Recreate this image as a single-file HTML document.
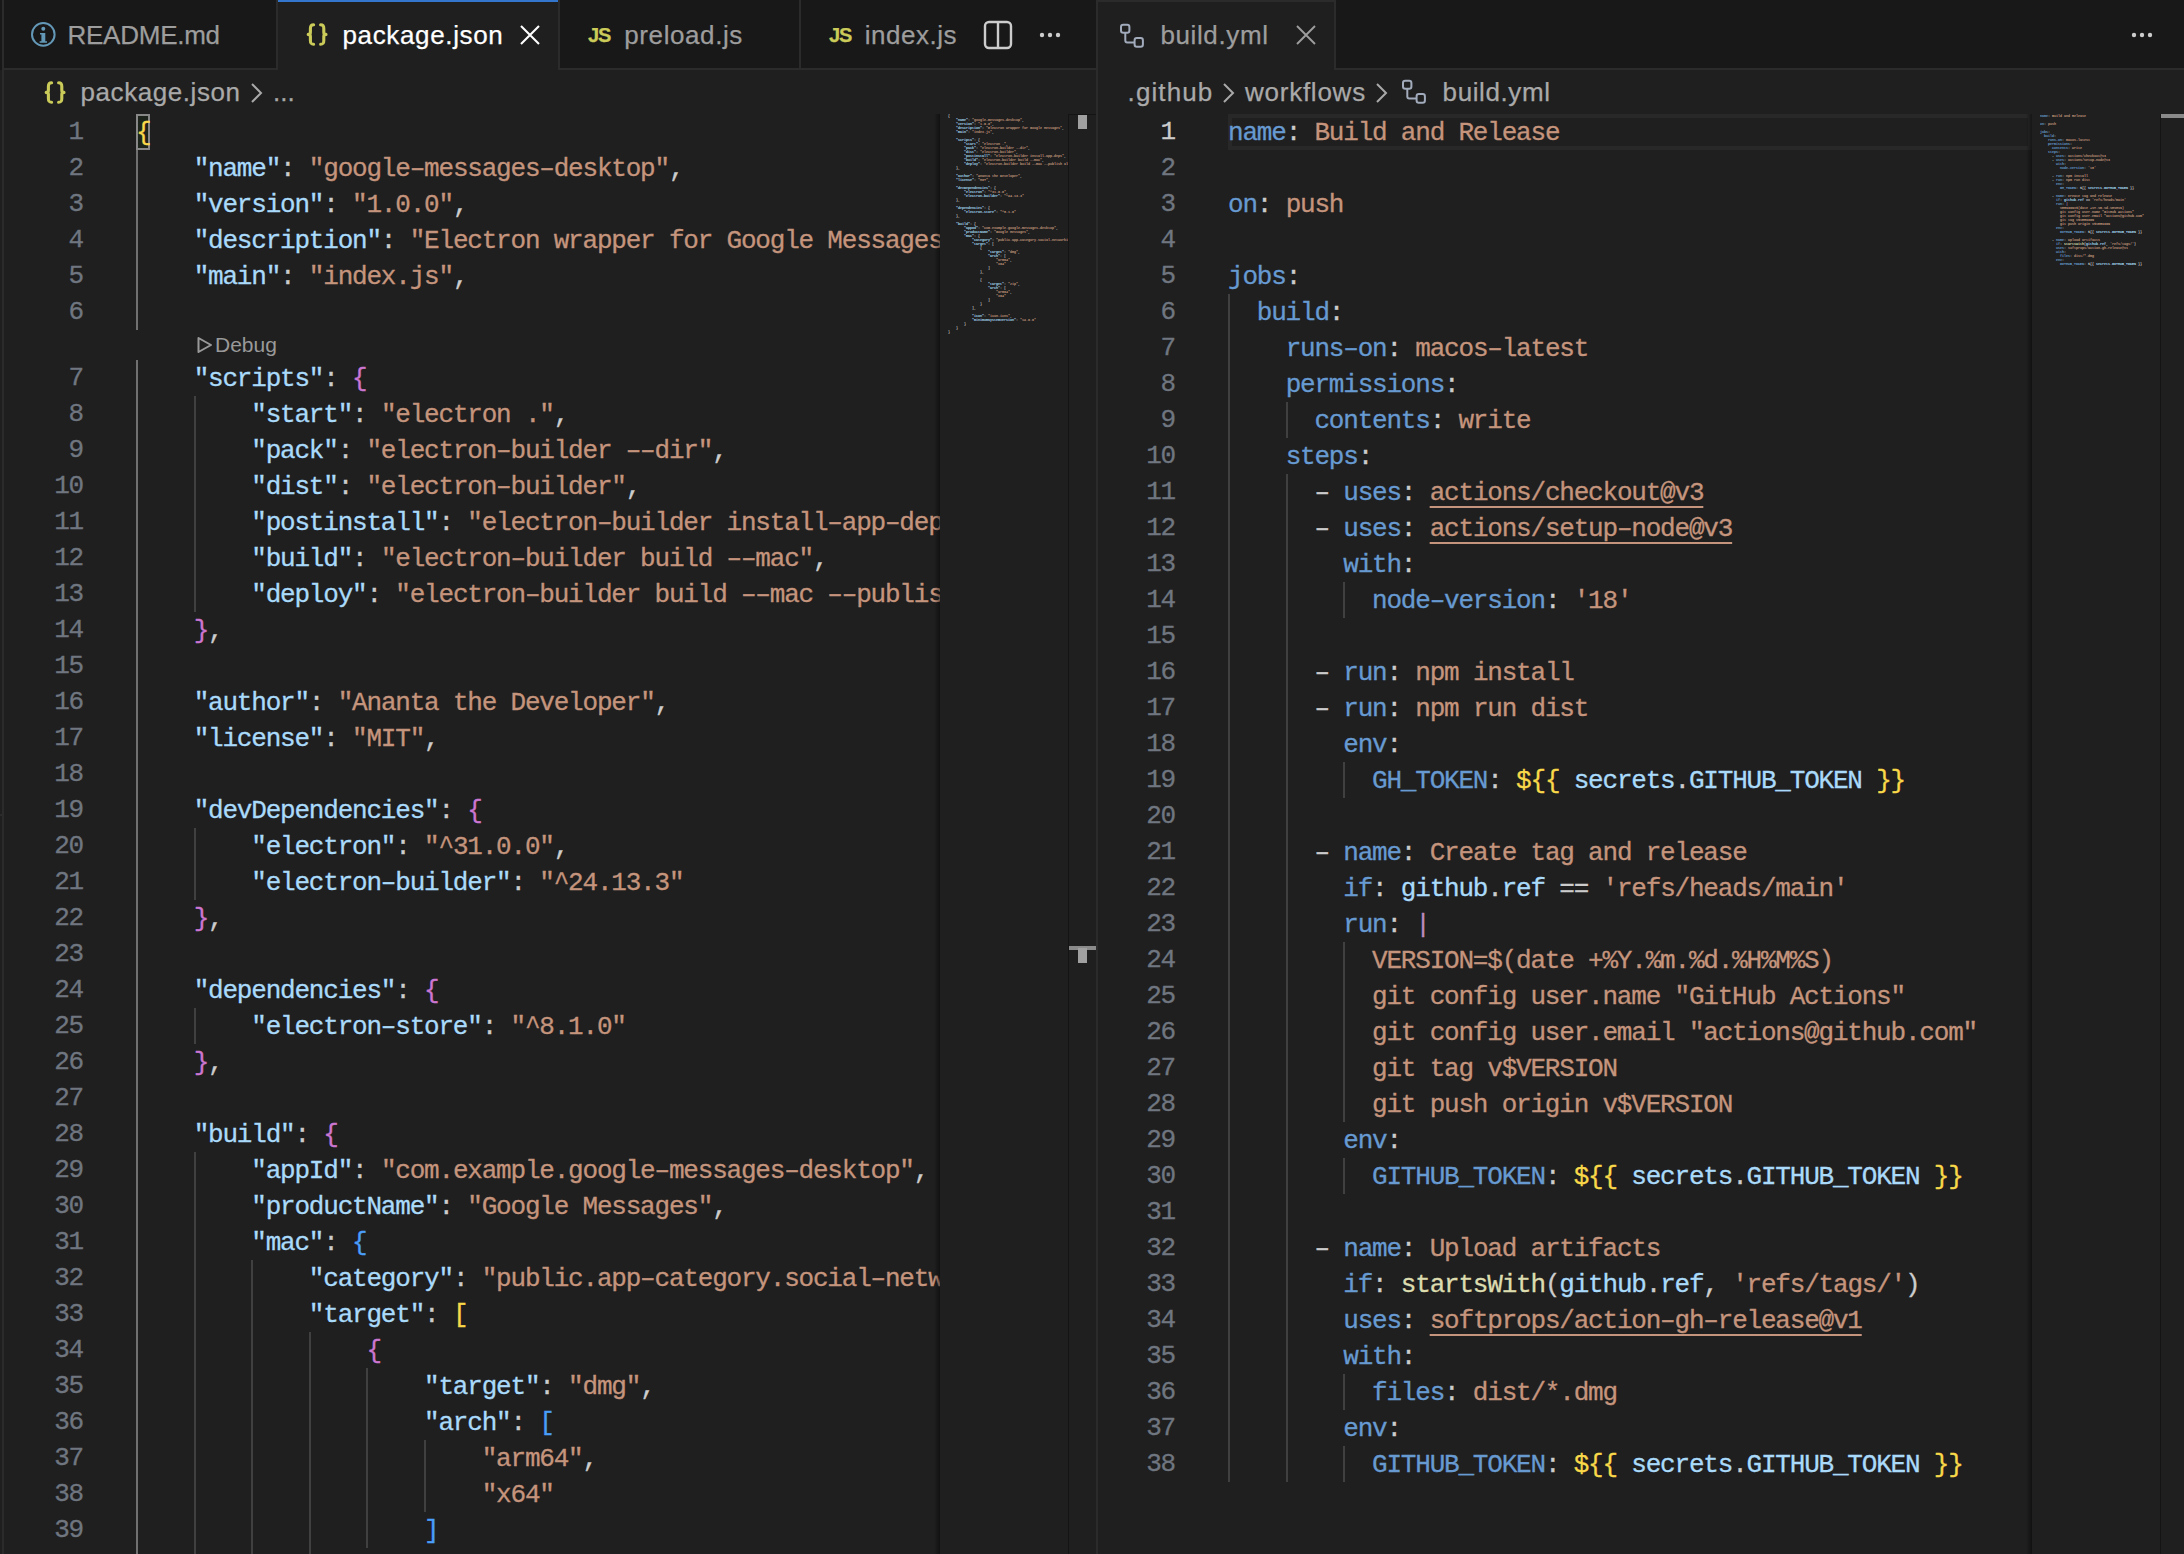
<!DOCTYPE html><html><head><meta charset="utf-8"><style>
*{margin:0;padding:0;box-sizing:border-box}
html,body{width:2184px;height:1554px;overflow:hidden;background:#1f1f1f}
body{position:relative;font-family:"Liberation Sans",sans-serif}
.a{position:absolute}
.g{position:absolute;width:2px}
.ln{position:absolute;height:36px;line-height:36px;padding-top:1px;white-space:pre;overflow:hidden;font-family:"Liberation Mono",monospace;font-size:26px;letter-spacing:-1.200px;-webkit-text-stroke:0.3px currentColor}
.ln span,.num{-webkit-text-stroke:0.3px currentColor}
.num{position:absolute;height:36px;line-height:36px;white-space:pre;font-family:"Liberation Mono",monospace;font-size:26px;letter-spacing:-1.200px;text-align:right}
.u{text-decoration:underline;text-decoration-thickness:2px;text-underline-offset:6px}
.tabt{position:absolute;top:0;height:70px;line-height:70px;font-size:26px;white-space:pre;-webkit-text-stroke:0.25px currentColor}
.bc{position:absolute;top:70px;height:44px;line-height:44px;font-size:26px;white-space:pre;color:#a9a9a9;-webkit-text-stroke:0.25px currentColor}
.mm{position:absolute;top:114px;white-space:pre;font-family:"Liberation Mono",monospace;font-size:13.333px;line-height:16px;transform:scale(0.25);transform-origin:0 0;font-weight:bold}
</style></head><body>
<div class="a" style="left:0;top:0;width:1096px;height:70px;background:#181818"></div>
<div class="a" style="left:2px;top:0;width:2px;height:1554px;background:#2b2b2b"></div>
<div class="a" style="left:0;top:814px;width:2px;height:2px;background:#2b2b2b"></div>
<div class="a" style="left:4px;top:68px;width:1092px;height:2px;background:#2b2b2b"></div>
<div class="a" style="left:276px;top:0;width:2px;height:68px;background:#2b2b2b"></div>
<div class="a" style="left:558px;top:0;width:2px;height:68px;background:#2b2b2b"></div>
<div class="a" style="left:799px;top:0;width:2px;height:68px;background:#2b2b2b"></div>
<div class="a" style="left:278px;top:0;width:280px;height:70px;background:#1f1f1f"></div>
<div class="a" style="left:278px;top:0;width:280px;height:2px;background:#3376cd"></div>
<svg class="a" style="left:30px;top:21px" width="27" height="27" viewBox="0 0 27 27"><circle cx="13.3" cy="13.4" r="11.3" fill="none" stroke="#6398b7" stroke-width="2"/><circle cx="13.3" cy="7.8" r="2" fill="#6398b7"/><path d="M10 12H15.3V20.2H17V21.8H9.6V20.2H11.4V13.5H10Z" fill="#6398b7"/></svg>
<div class="tabt" style="left:67.5px;letter-spacing:-0.25px;color:#9d9d9d">README.md</div>
<svg class="a" style="left:306px;top:23px" width="24" height="24" viewBox="0 0 24 24"><g fill="none" stroke="#cbcb5a" stroke-width="3.1" stroke-linecap="round" stroke-linejoin="round"><path d="M7.6 1.8C4.8 1.8 4.4 3 4.4 5.5V9.2C4.4 10.6 3.8 11.4 2.2 11.4C3.8 11.4 4.4 12.2 4.4 13.6V17.6C4.4 20.2 4.8 21.2 7.6 21.2"/><path d="M14.6 1.8C17.4 1.8 17.8 3 17.8 5.5V9.2C17.8 10.6 18.4 11.4 20 11.4C18.4 11.4 17.8 12.2 17.8 13.6V17.6C17.8 20.2 17.4 21.2 14.6 21.2"/></g></svg>
<div class="tabt" style="left:342.5px;letter-spacing:0.64px;color:#ffffff">package.json</div>
<svg class="a" style="left:519px;top:24px" width="22" height="22" viewBox="0 0 22 22"><path d="M2 2L20 20M20 2L2 20" stroke="#ffffff" stroke-width="2.1"/></svg>
<div class="tabt" style="left:588px;color:#cbcb5a;font-weight:bold;font-size:20px;letter-spacing:-1px">JS</div>
<div class="tabt" style="left:624.3px;letter-spacing:0.59px;color:#9d9d9d">preload.js</div>
<div class="tabt" style="left:829px;color:#cbcb5a;font-weight:bold;font-size:20px;letter-spacing:-1px">JS</div>
<div class="tabt" style="left:864.7px;letter-spacing:0.51px;color:#9d9d9d">index.js</div>
<svg class="a" style="left:982px;top:19px" width="32" height="32" viewBox="0 0 32 32"><rect x="3" y="3" width="26" height="26" rx="4" fill="none" stroke="#cccccc" stroke-width="2.4"/><path d="M16 3V29" stroke="#cccccc" stroke-width="2.4"/></svg>
<svg class="a" style="left:1036px;top:26px" width="28" height="18" viewBox="0 0 28 18"><circle cx="6" cy="9" r="2.2" fill="#cccccc"/><circle cx="14" cy="9" r="2.2" fill="#cccccc"/><circle cx="22" cy="9" r="2.2" fill="#cccccc"/></svg>
<div class="a" style="left:1098px;top:0;width:1086px;height:70px;background:#181818"></div>
<div class="a" style="left:1098px;top:68px;width:1086px;height:2px;background:#2b2b2b"></div>
<div class="a" style="left:1098px;top:0;width:236px;height:70px;background:#1f1f1f"></div>
<div class="a" style="left:1098px;top:0;width:236px;height:2px;background:#2b2b2b"></div>
<div class="a" style="left:1334px;top:0;width:2px;height:70px;background:#2b2b2b"></div>
<svg class="a" style="left:1119px;top:22.6px" width="28" height="28" viewBox="0 0 28 28"><g fill="none" stroke="#a1abbb" stroke-width="2"><rect x="2" y="1.8" width="8.4" height="8" rx="2.2"/><rect x="15.6" y="15" width="8.3" height="8.7" rx="2.2"/><path d="M6.3 9.8V17.4Q6.3 19.4 8.3 19.4H15.6"/></g></svg>
<div class="tabt" style="left:1160.4px;letter-spacing:0.62px;color:#9d9d9d">build.yml</div>
<svg class="a" style="left:1295px;top:24px" width="22" height="22" viewBox="0 0 22 22"><path d="M2 2L20 20M20 2L2 20" stroke="#9d9d9d" stroke-width="1.9"/></svg>
<svg class="a" style="left:2128px;top:26px" width="28" height="18" viewBox="0 0 28 18"><circle cx="6" cy="9" r="2.2" fill="#cccccc"/><circle cx="14" cy="9" r="2.2" fill="#cccccc"/><circle cx="22" cy="9" r="2.2" fill="#cccccc"/></svg>
<div class="a" style="left:1096px;top:0;width:2px;height:1554px;background:#2b2b2b"></div>
<svg class="a" style="left:44px;top:81px" width="24" height="24" viewBox="0 0 24 24"><g fill="none" stroke="#cbcb5a" stroke-width="3.1" stroke-linecap="round" stroke-linejoin="round"><path d="M7.6 1.8C4.8 1.8 4.4 3 4.4 5.5V9.2C4.4 10.6 3.8 11.4 2.2 11.4C3.8 11.4 4.4 12.2 4.4 13.6V17.6C4.4 20.2 4.8 21.2 7.6 21.2"/><path d="M14.6 1.8C17.4 1.8 17.8 3 17.8 5.5V9.2C17.8 10.6 18.4 11.4 20 11.4C18.4 11.4 17.8 12.2 17.8 13.6V17.6C17.8 20.2 17.4 21.2 14.6 21.2"/></g></svg>
<div class="bc" style="left:80.5px;letter-spacing:0.57px">package.json</div>
<svg class="a" style="left:250px;top:82px" width="14" height="22" viewBox="0 0 14 22"><path d="M2 2L11 11L2 20" fill="none" stroke="#a9a9a9" stroke-width="2"/></svg>
<div class="bc" style="left:273px">...</div>
<div class="bc" style="left:1127.6px;letter-spacing:1.1px">.github</div>
<svg class="a" style="left:1222px;top:82px" width="14" height="22" viewBox="0 0 14 22"><path d="M2 2L11 11L2 20" fill="none" stroke="#a9a9a9" stroke-width="2"/></svg>
<div class="bc" style="left:1245px;letter-spacing:0.75px">workflows</div>
<svg class="a" style="left:1375px;top:82px" width="14" height="22" viewBox="0 0 14 22"><path d="M2 2L11 11L2 20" fill="none" stroke="#a9a9a9" stroke-width="2"/></svg>
<svg class="a" style="left:1401px;top:79px" width="28" height="28" viewBox="0 0 28 28"><g fill="none" stroke="#a1abbb" stroke-width="2"><rect x="2" y="1.8" width="8.4" height="8" rx="2.2"/><rect x="15.6" y="15" width="8.3" height="8.7" rx="2.2"/><path d="M6.3 9.8V17.4Q6.3 19.4 8.3 19.4H15.6"/></g></svg>
<div class="bc" style="left:1442.6px;letter-spacing:0.59px">build.yml</div>
<div class="a" style="left:1228px;top:114px;width:804px;height:36px;border:4px solid #282828"></div>
<div class="a" style="left:136px;top:114px;width:14px;height:36px;border:2px solid #888888;background:#1d241c"></div>
<div class="g" style="left:136.0px;top:150px;height:180px;background:#707070"></div>
<div class="g" style="left:136.0px;top:360px;height:1728px;background:#707070"></div>
<div class="g" style="left:193.6px;top:396px;height:216px;background:#404040"></div>
<div class="g" style="left:193.6px;top:828px;height:72px;background:#404040"></div>
<div class="g" style="left:193.6px;top:1008px;height:36px;background:#404040"></div>
<div class="g" style="left:193.6px;top:1152px;height:900px;background:#404040"></div>
<div class="g" style="left:251.2px;top:1260px;height:756px;background:#404040"></div>
<div class="g" style="left:308.8px;top:1332px;height:540px;background:#404040"></div>
<div class="g" style="left:366.4px;top:1368px;height:180px;background:#404040"></div>
<div class="g" style="left:424.0px;top:1440px;height:72px;background:#404040"></div>
<div class="ln" style="left:136px;top:114px;width:804px"><span style="color:#f9d849">{</span></div>
<div class="num" style="right:2101px;top:114px;color:#6f7680">1</div>
<div class="ln" style="left:136px;top:150px;width:804px">    <span style="color:#aadafa">&quot;name&quot;</span><span style="color:#cccccc">:</span> <span style="color:#c5947c">&quot;google–messages–desktop&quot;</span><span style="color:#cccccc">,</span></div>
<div class="num" style="right:2101px;top:150px;color:#6f7680">2</div>
<div class="ln" style="left:136px;top:186px;width:804px">    <span style="color:#aadafa">&quot;version&quot;</span><span style="color:#cccccc">:</span> <span style="color:#c5947c">&quot;1.0.0&quot;</span><span style="color:#cccccc">,</span></div>
<div class="num" style="right:2101px;top:186px;color:#6f7680">3</div>
<div class="ln" style="left:136px;top:222px;width:804px">    <span style="color:#aadafa">&quot;description&quot;</span><span style="color:#cccccc">:</span> <span style="color:#c5947c">&quot;Electron wrapper for Google Messages&quot;</span><span style="color:#cccccc">,</span></div>
<div class="num" style="right:2101px;top:222px;color:#6f7680">4</div>
<div class="ln" style="left:136px;top:258px;width:804px">    <span style="color:#aadafa">&quot;main&quot;</span><span style="color:#cccccc">:</span> <span style="color:#c5947c">&quot;index.js&quot;</span><span style="color:#cccccc">,</span></div>
<div class="num" style="right:2101px;top:258px;color:#6f7680">5</div>
<div class="ln" style="left:136px;top:294px;width:804px"></div>
<div class="num" style="right:2101px;top:294px;color:#6f7680">6</div>
<div class="ln" style="left:136px;top:360px;width:804px">    <span style="color:#aadafa">&quot;scripts&quot;</span><span style="color:#cccccc">:</span> <span style="color:#cc76d1">{</span></div>
<div class="num" style="right:2101px;top:360px;color:#6f7680">7</div>
<div class="ln" style="left:136px;top:396px;width:804px">        <span style="color:#aadafa">&quot;start&quot;</span><span style="color:#cccccc">:</span> <span style="color:#c5947c">&quot;electron .&quot;</span><span style="color:#cccccc">,</span></div>
<div class="num" style="right:2101px;top:396px;color:#6f7680">8</div>
<div class="ln" style="left:136px;top:432px;width:804px">        <span style="color:#aadafa">&quot;pack&quot;</span><span style="color:#cccccc">:</span> <span style="color:#c5947c">&quot;electron–builder ––dir&quot;</span><span style="color:#cccccc">,</span></div>
<div class="num" style="right:2101px;top:432px;color:#6f7680">9</div>
<div class="ln" style="left:136px;top:468px;width:804px">        <span style="color:#aadafa">&quot;dist&quot;</span><span style="color:#cccccc">:</span> <span style="color:#c5947c">&quot;electron–builder&quot;</span><span style="color:#cccccc">,</span></div>
<div class="num" style="right:2101px;top:468px;color:#6f7680">10</div>
<div class="ln" style="left:136px;top:504px;width:804px">        <span style="color:#aadafa">&quot;postinstall&quot;</span><span style="color:#cccccc">:</span> <span style="color:#c5947c">&quot;electron–builder install–app–deps&quot;</span><span style="color:#cccccc">,</span></div>
<div class="num" style="right:2101px;top:504px;color:#6f7680">11</div>
<div class="ln" style="left:136px;top:540px;width:804px">        <span style="color:#aadafa">&quot;build&quot;</span><span style="color:#cccccc">:</span> <span style="color:#c5947c">&quot;electron–builder build ––mac&quot;</span><span style="color:#cccccc">,</span></div>
<div class="num" style="right:2101px;top:540px;color:#6f7680">12</div>
<div class="ln" style="left:136px;top:576px;width:804px">        <span style="color:#aadafa">&quot;deploy&quot;</span><span style="color:#cccccc">:</span> <span style="color:#c5947c">&quot;electron–builder build ––mac ––publish always&quot;</span></div>
<div class="num" style="right:2101px;top:576px;color:#6f7680">13</div>
<div class="ln" style="left:136px;top:612px;width:804px">    <span style="color:#cc76d1">}</span><span style="color:#cccccc">,</span></div>
<div class="num" style="right:2101px;top:612px;color:#6f7680">14</div>
<div class="ln" style="left:136px;top:648px;width:804px"></div>
<div class="num" style="right:2101px;top:648px;color:#6f7680">15</div>
<div class="ln" style="left:136px;top:684px;width:804px">    <span style="color:#aadafa">&quot;author&quot;</span><span style="color:#cccccc">:</span> <span style="color:#c5947c">&quot;Ananta the Developer&quot;</span><span style="color:#cccccc">,</span></div>
<div class="num" style="right:2101px;top:684px;color:#6f7680">16</div>
<div class="ln" style="left:136px;top:720px;width:804px">    <span style="color:#aadafa">&quot;license&quot;</span><span style="color:#cccccc">:</span> <span style="color:#c5947c">&quot;MIT&quot;</span><span style="color:#cccccc">,</span></div>
<div class="num" style="right:2101px;top:720px;color:#6f7680">17</div>
<div class="ln" style="left:136px;top:756px;width:804px"></div>
<div class="num" style="right:2101px;top:756px;color:#6f7680">18</div>
<div class="ln" style="left:136px;top:792px;width:804px">    <span style="color:#aadafa">&quot;devDependencies&quot;</span><span style="color:#cccccc">:</span> <span style="color:#cc76d1">{</span></div>
<div class="num" style="right:2101px;top:792px;color:#6f7680">19</div>
<div class="ln" style="left:136px;top:828px;width:804px">        <span style="color:#aadafa">&quot;electron&quot;</span><span style="color:#cccccc">:</span> <span style="color:#c5947c">&quot;^31.0.0&quot;</span><span style="color:#cccccc">,</span></div>
<div class="num" style="right:2101px;top:828px;color:#6f7680">20</div>
<div class="ln" style="left:136px;top:864px;width:804px">        <span style="color:#aadafa">&quot;electron–builder&quot;</span><span style="color:#cccccc">:</span> <span style="color:#c5947c">&quot;^24.13.3&quot;</span></div>
<div class="num" style="right:2101px;top:864px;color:#6f7680">21</div>
<div class="ln" style="left:136px;top:900px;width:804px">    <span style="color:#cc76d1">}</span><span style="color:#cccccc">,</span></div>
<div class="num" style="right:2101px;top:900px;color:#6f7680">22</div>
<div class="ln" style="left:136px;top:936px;width:804px"></div>
<div class="num" style="right:2101px;top:936px;color:#6f7680">23</div>
<div class="ln" style="left:136px;top:972px;width:804px">    <span style="color:#aadafa">&quot;dependencies&quot;</span><span style="color:#cccccc">:</span> <span style="color:#cc76d1">{</span></div>
<div class="num" style="right:2101px;top:972px;color:#6f7680">24</div>
<div class="ln" style="left:136px;top:1008px;width:804px">        <span style="color:#aadafa">&quot;electron–store&quot;</span><span style="color:#cccccc">:</span> <span style="color:#c5947c">&quot;^8.1.0&quot;</span></div>
<div class="num" style="right:2101px;top:1008px;color:#6f7680">25</div>
<div class="ln" style="left:136px;top:1044px;width:804px">    <span style="color:#cc76d1">}</span><span style="color:#cccccc">,</span></div>
<div class="num" style="right:2101px;top:1044px;color:#6f7680">26</div>
<div class="ln" style="left:136px;top:1080px;width:804px"></div>
<div class="num" style="right:2101px;top:1080px;color:#6f7680">27</div>
<div class="ln" style="left:136px;top:1116px;width:804px">    <span style="color:#aadafa">&quot;build&quot;</span><span style="color:#cccccc">:</span> <span style="color:#cc76d1">{</span></div>
<div class="num" style="right:2101px;top:1116px;color:#6f7680">28</div>
<div class="ln" style="left:136px;top:1152px;width:804px">        <span style="color:#aadafa">&quot;appId&quot;</span><span style="color:#cccccc">:</span> <span style="color:#c5947c">&quot;com.example.google–messages–desktop&quot;</span><span style="color:#cccccc">,</span></div>
<div class="num" style="right:2101px;top:1152px;color:#6f7680">29</div>
<div class="ln" style="left:136px;top:1188px;width:804px">        <span style="color:#aadafa">&quot;productName&quot;</span><span style="color:#cccccc">:</span> <span style="color:#c5947c">&quot;Google Messages&quot;</span><span style="color:#cccccc">,</span></div>
<div class="num" style="right:2101px;top:1188px;color:#6f7680">30</div>
<div class="ln" style="left:136px;top:1224px;width:804px">        <span style="color:#aadafa">&quot;mac&quot;</span><span style="color:#cccccc">:</span> <span style="color:#4a9df8">{</span></div>
<div class="num" style="right:2101px;top:1224px;color:#6f7680">31</div>
<div class="ln" style="left:136px;top:1260px;width:804px">            <span style="color:#aadafa">&quot;category&quot;</span><span style="color:#cccccc">:</span> <span style="color:#c5947c">&quot;public.app–category.social–networking&quot;</span><span style="color:#cccccc">,</span></div>
<div class="num" style="right:2101px;top:1260px;color:#6f7680">32</div>
<div class="ln" style="left:136px;top:1296px;width:804px">            <span style="color:#aadafa">&quot;target&quot;</span><span style="color:#cccccc">:</span> <span style="color:#f9d849">[</span></div>
<div class="num" style="right:2101px;top:1296px;color:#6f7680">33</div>
<div class="ln" style="left:136px;top:1332px;width:804px">                <span style="color:#cc76d1">{</span></div>
<div class="num" style="right:2101px;top:1332px;color:#6f7680">34</div>
<div class="ln" style="left:136px;top:1368px;width:804px">                    <span style="color:#aadafa">&quot;target&quot;</span><span style="color:#cccccc">:</span> <span style="color:#c5947c">&quot;dmg&quot;</span><span style="color:#cccccc">,</span></div>
<div class="num" style="right:2101px;top:1368px;color:#6f7680">35</div>
<div class="ln" style="left:136px;top:1404px;width:804px">                    <span style="color:#aadafa">&quot;arch&quot;</span><span style="color:#cccccc">:</span> <span style="color:#4a9df8">[</span></div>
<div class="num" style="right:2101px;top:1404px;color:#6f7680">36</div>
<div class="ln" style="left:136px;top:1440px;width:804px">                        <span style="color:#c5947c">&quot;arm64&quot;</span><span style="color:#cccccc">,</span></div>
<div class="num" style="right:2101px;top:1440px;color:#6f7680">37</div>
<div class="ln" style="left:136px;top:1476px;width:804px">                        <span style="color:#c5947c">&quot;x64&quot;</span></div>
<div class="num" style="right:2101px;top:1476px;color:#6f7680">38</div>
<div class="ln" style="left:136px;top:1512px;width:804px">                    <span style="color:#4a9df8">]</span></div>
<div class="num" style="right:2101px;top:1512px;color:#6f7680">39</div>
<div class="ln" style="left:136px;top:1548px;width:804px">                <span style="color:#cc76d1">}</span><span style="color:#cccccc">,</span></div>
<div class="num" style="right:2101px;top:1548px;color:#6f7680">40</div>
<div class="g" style="left:1228.0px;top:294px;height:1188px;background:#404040"></div>
<div class="g" style="left:1285.6px;top:402px;height:36px;background:#404040"></div>
<div class="g" style="left:1285.6px;top:474px;height:1008px;background:#404040"></div>
<div class="g" style="left:1343.2px;top:582px;height:36px;background:#404040"></div>
<div class="g" style="left:1343.2px;top:762px;height:36px;background:#404040"></div>
<div class="g" style="left:1343.2px;top:942px;height:180px;background:#404040"></div>
<div class="g" style="left:1343.2px;top:1158px;height:36px;background:#404040"></div>
<div class="g" style="left:1343.2px;top:1374px;height:36px;background:#404040"></div>
<div class="g" style="left:1343.2px;top:1446px;height:36px;background:#404040"></div>
<div class="ln" style="left:1228px;top:114px;width:804px"><span style="color:#679ad1">name</span><span style="color:#cccccc">:</span> <span style="color:#c5947c">Build and Release</span></div>
<div class="num" style="right:1009px;top:114px;color:#cccccc">1</div>
<div class="ln" style="left:1228px;top:150px;width:804px"></div>
<div class="num" style="right:1009px;top:150px;color:#6f7680">2</div>
<div class="ln" style="left:1228px;top:186px;width:804px"><span style="color:#679ad1">on</span><span style="color:#cccccc">:</span> <span style="color:#c5947c">push</span></div>
<div class="num" style="right:1009px;top:186px;color:#6f7680">3</div>
<div class="ln" style="left:1228px;top:222px;width:804px"></div>
<div class="num" style="right:1009px;top:222px;color:#6f7680">4</div>
<div class="ln" style="left:1228px;top:258px;width:804px"><span style="color:#679ad1">jobs</span><span style="color:#cccccc">:</span></div>
<div class="num" style="right:1009px;top:258px;color:#6f7680">5</div>
<div class="ln" style="left:1228px;top:294px;width:804px">  <span style="color:#679ad1">build</span><span style="color:#cccccc">:</span></div>
<div class="num" style="right:1009px;top:294px;color:#6f7680">6</div>
<div class="ln" style="left:1228px;top:330px;width:804px">    <span style="color:#679ad1">runs–on</span><span style="color:#cccccc">:</span> <span style="color:#c5947c">macos–latest</span></div>
<div class="num" style="right:1009px;top:330px;color:#6f7680">7</div>
<div class="ln" style="left:1228px;top:366px;width:804px">    <span style="color:#679ad1">permissions</span><span style="color:#cccccc">:</span></div>
<div class="num" style="right:1009px;top:366px;color:#6f7680">8</div>
<div class="ln" style="left:1228px;top:402px;width:804px">      <span style="color:#679ad1">contents</span><span style="color:#cccccc">:</span> <span style="color:#c5947c">write</span></div>
<div class="num" style="right:1009px;top:402px;color:#6f7680">9</div>
<div class="ln" style="left:1228px;top:438px;width:804px">    <span style="color:#679ad1">steps</span><span style="color:#cccccc">:</span></div>
<div class="num" style="right:1009px;top:438px;color:#6f7680">10</div>
<div class="ln" style="left:1228px;top:474px;width:804px">      <span style="color:#cccccc">–</span> <span style="color:#679ad1">uses</span><span style="color:#cccccc">:</span> <span class="u" style="color:#c5947c">actions/checkout@v3</span></div>
<div class="num" style="right:1009px;top:474px;color:#6f7680">11</div>
<div class="ln" style="left:1228px;top:510px;width:804px">      <span style="color:#cccccc">–</span> <span style="color:#679ad1">uses</span><span style="color:#cccccc">:</span> <span class="u" style="color:#c5947c">actions/setup–node@v3</span></div>
<div class="num" style="right:1009px;top:510px;color:#6f7680">12</div>
<div class="ln" style="left:1228px;top:546px;width:804px">        <span style="color:#679ad1">with</span><span style="color:#cccccc">:</span></div>
<div class="num" style="right:1009px;top:546px;color:#6f7680">13</div>
<div class="ln" style="left:1228px;top:582px;width:804px">          <span style="color:#679ad1">node–version</span><span style="color:#cccccc">:</span> <span style="color:#c5947c">&#x27;18&#x27;</span></div>
<div class="num" style="right:1009px;top:582px;color:#6f7680">14</div>
<div class="ln" style="left:1228px;top:618px;width:804px"></div>
<div class="num" style="right:1009px;top:618px;color:#6f7680">15</div>
<div class="ln" style="left:1228px;top:654px;width:804px">      <span style="color:#cccccc">–</span> <span style="color:#679ad1">run</span><span style="color:#cccccc">:</span> <span style="color:#c5947c">npm install</span></div>
<div class="num" style="right:1009px;top:654px;color:#6f7680">16</div>
<div class="ln" style="left:1228px;top:690px;width:804px">      <span style="color:#cccccc">–</span> <span style="color:#679ad1">run</span><span style="color:#cccccc">:</span> <span style="color:#c5947c">npm run dist</span></div>
<div class="num" style="right:1009px;top:690px;color:#6f7680">17</div>
<div class="ln" style="left:1228px;top:726px;width:804px">        <span style="color:#679ad1">env</span><span style="color:#cccccc">:</span></div>
<div class="num" style="right:1009px;top:726px;color:#6f7680">18</div>
<div class="ln" style="left:1228px;top:762px;width:804px">          <span style="color:#679ad1">GH_TOKEN</span><span style="color:#cccccc">:</span> <span style="color:#f9d849">$</span><span style="color:#f9d849">{{</span> <span style="color:#aadafa">secrets</span><span style="color:#cccccc">.</span><span style="color:#aadafa">GITHUB_TOKEN</span> <span style="color:#f9d849">}}</span></div>
<div class="num" style="right:1009px;top:762px;color:#6f7680">19</div>
<div class="ln" style="left:1228px;top:798px;width:804px"></div>
<div class="num" style="right:1009px;top:798px;color:#6f7680">20</div>
<div class="ln" style="left:1228px;top:834px;width:804px">      <span style="color:#cccccc">–</span> <span style="color:#679ad1">name</span><span style="color:#cccccc">:</span> <span style="color:#c5947c">Create tag and release</span></div>
<div class="num" style="right:1009px;top:834px;color:#6f7680">21</div>
<div class="ln" style="left:1228px;top:870px;width:804px">        <span style="color:#679ad1">if</span><span style="color:#cccccc">:</span> <span style="color:#aadafa">github</span><span style="color:#cccccc">.</span><span style="color:#aadafa">ref</span> <span style="color:#cccccc">==</span> <span style="color:#c5947c">&#x27;refs/heads/main&#x27;</span></div>
<div class="num" style="right:1009px;top:870px;color:#6f7680">22</div>
<div class="ln" style="left:1228px;top:906px;width:804px">        <span style="color:#679ad1">run</span><span style="color:#cccccc">:</span> <span style="color:#bc89bd">|</span></div>
<div class="num" style="right:1009px;top:906px;color:#6f7680">23</div>
<div class="ln" style="left:1228px;top:942px;width:804px">          <span style="color:#c5947c">VERSION=$(date +%Y.%m.%d.%H%M%S)</span></div>
<div class="num" style="right:1009px;top:942px;color:#6f7680">24</div>
<div class="ln" style="left:1228px;top:978px;width:804px">          <span style="color:#c5947c">git config user.name &quot;GitHub Actions&quot;</span></div>
<div class="num" style="right:1009px;top:978px;color:#6f7680">25</div>
<div class="ln" style="left:1228px;top:1014px;width:804px">          <span style="color:#c5947c">git config user.email &quot;actions@github.com&quot;</span></div>
<div class="num" style="right:1009px;top:1014px;color:#6f7680">26</div>
<div class="ln" style="left:1228px;top:1050px;width:804px">          <span style="color:#c5947c">git tag v$VERSION</span></div>
<div class="num" style="right:1009px;top:1050px;color:#6f7680">27</div>
<div class="ln" style="left:1228px;top:1086px;width:804px">          <span style="color:#c5947c">git push origin v$VERSION</span></div>
<div class="num" style="right:1009px;top:1086px;color:#6f7680">28</div>
<div class="ln" style="left:1228px;top:1122px;width:804px">        <span style="color:#679ad1">env</span><span style="color:#cccccc">:</span></div>
<div class="num" style="right:1009px;top:1122px;color:#6f7680">29</div>
<div class="ln" style="left:1228px;top:1158px;width:804px">          <span style="color:#679ad1">GITHUB_TOKEN</span><span style="color:#cccccc">:</span> <span style="color:#f9d849">$</span><span style="color:#f9d849">{{</span> <span style="color:#aadafa">secrets</span><span style="color:#cccccc">.</span><span style="color:#aadafa">GITHUB_TOKEN</span> <span style="color:#f9d849">}}</span></div>
<div class="num" style="right:1009px;top:1158px;color:#6f7680">30</div>
<div class="ln" style="left:1228px;top:1194px;width:804px"></div>
<div class="num" style="right:1009px;top:1194px;color:#6f7680">31</div>
<div class="ln" style="left:1228px;top:1230px;width:804px">      <span style="color:#cccccc">–</span> <span style="color:#679ad1">name</span><span style="color:#cccccc">:</span> <span style="color:#c5947c">Upload artifacts</span></div>
<div class="num" style="right:1009px;top:1230px;color:#6f7680">32</div>
<div class="ln" style="left:1228px;top:1266px;width:804px">        <span style="color:#679ad1">if</span><span style="color:#cccccc">:</span> <span style="color:#dcdcaf">startsWith</span><span style="color:#cccccc">(</span><span style="color:#aadafa">github</span><span style="color:#cccccc">.</span><span style="color:#aadafa">ref</span><span style="color:#cccccc">,</span> <span style="color:#c5947c">&#x27;refs/tags/&#x27;</span><span style="color:#cccccc">)</span></div>
<div class="num" style="right:1009px;top:1266px;color:#6f7680">33</div>
<div class="ln" style="left:1228px;top:1302px;width:804px">        <span style="color:#679ad1">uses</span><span style="color:#cccccc">:</span> <span class="u" style="color:#c5947c">softprops/action–gh–release@v1</span></div>
<div class="num" style="right:1009px;top:1302px;color:#6f7680">34</div>
<div class="ln" style="left:1228px;top:1338px;width:804px">        <span style="color:#679ad1">with</span><span style="color:#cccccc">:</span></div>
<div class="num" style="right:1009px;top:1338px;color:#6f7680">35</div>
<div class="ln" style="left:1228px;top:1374px;width:804px">          <span style="color:#679ad1">files</span><span style="color:#cccccc">:</span> <span style="color:#c5947c">dist/*.dmg</span></div>
<div class="num" style="right:1009px;top:1374px;color:#6f7680">36</div>
<div class="ln" style="left:1228px;top:1410px;width:804px">        <span style="color:#679ad1">env</span><span style="color:#cccccc">:</span></div>
<div class="num" style="right:1009px;top:1410px;color:#6f7680">37</div>
<div class="ln" style="left:1228px;top:1446px;width:804px">          <span style="color:#679ad1">GITHUB_TOKEN</span><span style="color:#cccccc">:</span> <span style="color:#f9d849">$</span><span style="color:#f9d849">{{</span> <span style="color:#aadafa">secrets</span><span style="color:#cccccc">.</span><span style="color:#aadafa">GITHUB_TOKEN</span> <span style="color:#f9d849">}}</span></div>
<div class="num" style="right:1009px;top:1446px;color:#6f7680">38</div>
<svg class="a" style="left:196px;top:336px" width="18" height="18" viewBox="0 0 18 18"><path d="M2.5 2L15 9L2.5 16Z" fill="none" stroke="#999999" stroke-width="2" stroke-linejoin="round"/></svg>
<div class="a" style="left:215px;top:330px;height:30px;line-height:30px;font-size:21px;color:#999999">Debug</div>
<div class="a" style="left:940px;top:114px;width:128px;height:1440px;background:#1f1f1f;overflow:hidden">
<div class="mm" style="left:8px;top:0"><span style="color:#cccccc">{</span>
    <span style="color:#aadafa">&quot;name&quot;</span><span style="color:#cccccc">:</span> <span style="color:#c5947c">&quot;google-messages-desktop&quot;</span><span style="color:#cccccc">,</span>
    <span style="color:#aadafa">&quot;version&quot;</span><span style="color:#cccccc">:</span> <span style="color:#c5947c">&quot;1.0.0&quot;</span><span style="color:#cccccc">,</span>
    <span style="color:#aadafa">&quot;description&quot;</span><span style="color:#cccccc">:</span> <span style="color:#c5947c">&quot;Electron wrapper for Google Messages&quot;</span><span style="color:#cccccc">,</span>
    <span style="color:#aadafa">&quot;main&quot;</span><span style="color:#cccccc">:</span> <span style="color:#c5947c">&quot;index.js&quot;</span><span style="color:#cccccc">,</span>

    <span style="color:#aadafa">&quot;scripts&quot;</span><span style="color:#cccccc">:</span> <span style="color:#cccccc">{</span>
        <span style="color:#aadafa">&quot;start&quot;</span><span style="color:#cccccc">:</span> <span style="color:#c5947c">&quot;electron .&quot;</span><span style="color:#cccccc">,</span>
        <span style="color:#aadafa">&quot;pack&quot;</span><span style="color:#cccccc">:</span> <span style="color:#c5947c">&quot;electron-builder --dir&quot;</span><span style="color:#cccccc">,</span>
        <span style="color:#aadafa">&quot;dist&quot;</span><span style="color:#cccccc">:</span> <span style="color:#c5947c">&quot;electron-builder&quot;</span><span style="color:#cccccc">,</span>
        <span style="color:#aadafa">&quot;postinstall&quot;</span><span style="color:#cccccc">:</span> <span style="color:#c5947c">&quot;electron-builder install-app-deps&quot;</span><span style="color:#cccccc">,</span>
        <span style="color:#aadafa">&quot;build&quot;</span><span style="color:#cccccc">:</span> <span style="color:#c5947c">&quot;electron-builder build --mac&quot;</span><span style="color:#cccccc">,</span>
        <span style="color:#aadafa">&quot;deploy&quot;</span><span style="color:#cccccc">:</span> <span style="color:#c5947c">&quot;electron-builder build --mac --publish always&quot;</span>
    <span style="color:#cccccc">}</span><span style="color:#cccccc">,</span>

    <span style="color:#aadafa">&quot;author&quot;</span><span style="color:#cccccc">:</span> <span style="color:#c5947c">&quot;Ananta the Developer&quot;</span><span style="color:#cccccc">,</span>
    <span style="color:#aadafa">&quot;license&quot;</span><span style="color:#cccccc">:</span> <span style="color:#c5947c">&quot;MIT&quot;</span><span style="color:#cccccc">,</span>

    <span style="color:#aadafa">&quot;devDependencies&quot;</span><span style="color:#cccccc">:</span> <span style="color:#cccccc">{</span>
        <span style="color:#aadafa">&quot;electron&quot;</span><span style="color:#cccccc">:</span> <span style="color:#c5947c">&quot;^31.0.0&quot;</span><span style="color:#cccccc">,</span>
        <span style="color:#aadafa">&quot;electron-builder&quot;</span><span style="color:#cccccc">:</span> <span style="color:#c5947c">&quot;^24.13.3&quot;</span>
    <span style="color:#cccccc">}</span><span style="color:#cccccc">,</span>

    <span style="color:#aadafa">&quot;dependencies&quot;</span><span style="color:#cccccc">:</span> <span style="color:#cccccc">{</span>
        <span style="color:#aadafa">&quot;electron-store&quot;</span><span style="color:#cccccc">:</span> <span style="color:#c5947c">&quot;^8.1.0&quot;</span>
    <span style="color:#cccccc">}</span><span style="color:#cccccc">,</span>

    <span style="color:#aadafa">&quot;build&quot;</span><span style="color:#cccccc">:</span> <span style="color:#cccccc">{</span>
        <span style="color:#aadafa">&quot;appId&quot;</span><span style="color:#cccccc">:</span> <span style="color:#c5947c">&quot;com.example.google-messages-desktop&quot;</span><span style="color:#cccccc">,</span>
        <span style="color:#aadafa">&quot;productName&quot;</span><span style="color:#cccccc">:</span> <span style="color:#c5947c">&quot;Google Messages&quot;</span><span style="color:#cccccc">,</span>
        <span style="color:#aadafa">&quot;mac&quot;</span><span style="color:#cccccc">:</span> <span style="color:#cccccc">{</span>
            <span style="color:#aadafa">&quot;category&quot;</span><span style="color:#cccccc">:</span> <span style="color:#c5947c">&quot;public.app-category.social-networking&quot;</span><span style="color:#cccccc">,</span>
            <span style="color:#aadafa">&quot;target&quot;</span><span style="color:#cccccc">:</span> <span style="color:#cccccc">[</span>
                <span style="color:#cccccc">{</span>
                    <span style="color:#aadafa">&quot;target&quot;</span><span style="color:#cccccc">:</span> <span style="color:#c5947c">&quot;dmg&quot;</span><span style="color:#cccccc">,</span>
                    <span style="color:#aadafa">&quot;arch&quot;</span><span style="color:#cccccc">:</span> <span style="color:#cccccc">[</span>
                        <span style="color:#c5947c">&quot;arm64&quot;</span><span style="color:#cccccc">,</span>
                        <span style="color:#c5947c">&quot;x64&quot;</span>
                    <span style="color:#cccccc">]</span>
                <span style="color:#cccccc">}</span><span style="color:#cccccc">,</span>

                <span style="color:#cccccc">{</span>
                    <span style="color:#aadafa">&quot;target&quot;</span><span style="color:#cccccc">:</span> <span style="color:#c5947c">&quot;zip&quot;</span><span style="color:#cccccc">,</span>
                    <span style="color:#aadafa">&quot;arch&quot;</span><span style="color:#cccccc">:</span> <span style="color:#cccccc">[</span>
                        <span style="color:#c5947c">&quot;arm64&quot;</span><span style="color:#cccccc">,</span>
                        <span style="color:#c5947c">&quot;x64&quot;</span>
                    <span style="color:#cccccc">]</span>
                <span style="color:#cccccc">}</span>
            <span style="color:#cccccc">]</span><span style="color:#cccccc">,</span>

            <span style="color:#aadafa">&quot;icon&quot;</span><span style="color:#cccccc">:</span> <span style="color:#c5947c">&quot;icon.icns&quot;</span><span style="color:#cccccc">,</span>
            <span style="color:#aadafa">&quot;minimumSystemVersion&quot;</span><span style="color:#cccccc">:</span> <span style="color:#c5947c">&quot;12.0.0&quot;</span>
        <span style="color:#cccccc">}</span>
    <span style="color:#cccccc">}</span>
<span style="color:#cccccc">}</span></div>
</div>
<div class="a" style="left:2032px;top:114px;width:128px;height:1440px;background:#1f1f1f;overflow:hidden">
<div class="mm" style="left:8px;top:0"><span style="color:#679ad1">name</span><span style="color:#cccccc">:</span> <span style="color:#c5947c">Build and Release</span>

<span style="color:#679ad1">on</span><span style="color:#cccccc">:</span> <span style="color:#c5947c">push</span>

<span style="color:#679ad1">jobs</span><span style="color:#cccccc">:</span>
  <span style="color:#679ad1">build</span><span style="color:#cccccc">:</span>
    <span style="color:#679ad1">runs-on</span><span style="color:#cccccc">:</span> <span style="color:#c5947c">macos-latest</span>
    <span style="color:#679ad1">permissions</span><span style="color:#cccccc">:</span>
      <span style="color:#679ad1">contents</span><span style="color:#cccccc">:</span> <span style="color:#c5947c">write</span>
    <span style="color:#679ad1">steps</span><span style="color:#cccccc">:</span>
      <span style="color:#cccccc">-</span> <span style="color:#679ad1">uses</span><span style="color:#cccccc">:</span> <span style="color:#c5947c">actions/checkout@v3</span>
      <span style="color:#cccccc">-</span> <span style="color:#679ad1">uses</span><span style="color:#cccccc">:</span> <span style="color:#c5947c">actions/setup-node@v3</span>
        <span style="color:#679ad1">with</span><span style="color:#cccccc">:</span>
          <span style="color:#679ad1">node-version</span><span style="color:#cccccc">:</span> <span style="color:#c5947c">&#x27;18&#x27;</span>

      <span style="color:#cccccc">-</span> <span style="color:#679ad1">run</span><span style="color:#cccccc">:</span> <span style="color:#c5947c">npm install</span>
      <span style="color:#cccccc">-</span> <span style="color:#679ad1">run</span><span style="color:#cccccc">:</span> <span style="color:#c5947c">npm run dist</span>
        <span style="color:#679ad1">env</span><span style="color:#cccccc">:</span>
          <span style="color:#679ad1">GH_TOKEN</span><span style="color:#cccccc">:</span> <span style="color:#cccccc">$</span><span style="color:#cccccc">{{</span> <span style="color:#aadafa">secrets</span><span style="color:#cccccc">.</span><span style="color:#aadafa">GITHUB_TOKEN</span> <span style="color:#cccccc">}}</span>

      <span style="color:#cccccc">-</span> <span style="color:#679ad1">name</span><span style="color:#cccccc">:</span> <span style="color:#c5947c">Create tag and release</span>
        <span style="color:#679ad1">if</span><span style="color:#cccccc">:</span> <span style="color:#aadafa">github</span><span style="color:#cccccc">.</span><span style="color:#aadafa">ref</span> <span style="color:#cccccc">==</span> <span style="color:#c5947c">&#x27;refs/heads/main&#x27;</span>
        <span style="color:#679ad1">run</span><span style="color:#cccccc">:</span> <span style="color:#bc89bd">|</span>
          <span style="color:#c5947c">VERSION=$(date +%Y.%m.%d.%H%M%S)</span>
          <span style="color:#c5947c">git config user.name &quot;GitHub Actions&quot;</span>
          <span style="color:#c5947c">git config user.email &quot;actions@github.com&quot;</span>
          <span style="color:#c5947c">git tag v$VERSION</span>
          <span style="color:#c5947c">git push origin v$VERSION</span>
        <span style="color:#679ad1">env</span><span style="color:#cccccc">:</span>
          <span style="color:#679ad1">GITHUB_TOKEN</span><span style="color:#cccccc">:</span> <span style="color:#cccccc">$</span><span style="color:#cccccc">{{</span> <span style="color:#aadafa">secrets</span><span style="color:#cccccc">.</span><span style="color:#aadafa">GITHUB_TOKEN</span> <span style="color:#cccccc">}}</span>

      <span style="color:#cccccc">-</span> <span style="color:#679ad1">name</span><span style="color:#cccccc">:</span> <span style="color:#c5947c">Upload artifacts</span>
        <span style="color:#679ad1">if</span><span style="color:#cccccc">:</span> <span style="color:#dcdcaf">startsWith</span><span style="color:#cccccc">(</span><span style="color:#aadafa">github</span><span style="color:#cccccc">.</span><span style="color:#aadafa">ref</span><span style="color:#cccccc">,</span> <span style="color:#c5947c">&#x27;refs/tags/&#x27;</span><span style="color:#cccccc">)</span>
        <span style="color:#679ad1">uses</span><span style="color:#cccccc">:</span> <span style="color:#c5947c">softprops/action-gh-release@v1</span>
        <span style="color:#679ad1">with</span><span style="color:#cccccc">:</span>
          <span style="color:#679ad1">files</span><span style="color:#cccccc">:</span> <span style="color:#c5947c">dist/*.dmg</span>
        <span style="color:#679ad1">env</span><span style="color:#cccccc">:</span>
          <span style="color:#679ad1">GITHUB_TOKEN</span><span style="color:#cccccc">:</span> <span style="color:#cccccc">$</span><span style="color:#cccccc">{{</span> <span style="color:#aadafa">secrets</span><span style="color:#cccccc">.</span><span style="color:#aadafa">GITHUB_TOKEN</span> <span style="color:#cccccc">}}</span></div>
</div>
<div class="a" style="left:934px;top:114px;width:6px;height:1440px;background:linear-gradient(to right,rgba(0,0,0,0),rgba(0,0,0,0.45))"></div>
<div class="a" style="left:2026px;top:114px;width:6px;height:1440px;background:linear-gradient(to right,rgba(0,0,0,0),rgba(0,0,0,0.45))"></div>
<div class="a" style="left:1068px;top:114px;width:1px;height:1440px;background:#141414"></div>
<div class="a" style="left:1068px;top:114px;width:28px;height:1px;background:#141414"></div>
<div class="a" style="left:1078px;top:115px;width:9px;height:14px;background:#a0a0a0"></div>
<div class="a" style="left:1069px;top:946px;width:27px;height:4px;background:#8a8a8a"></div>
<div class="a" style="left:1078px;top:948px;width:9px;height:15px;background:#a0a0a0"></div>
<div class="a" style="left:2160px;top:114px;width:1px;height:1440px;background:#141414"></div>
<div class="a" style="left:2161px;top:114px;width:23px;height:4px;background:#8a8a8a"></div>
</body></html>
